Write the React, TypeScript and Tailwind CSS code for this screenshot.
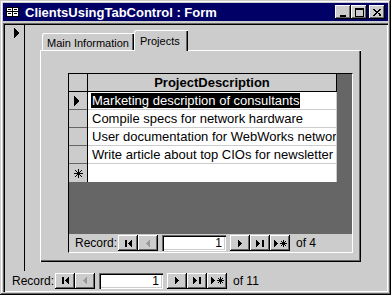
import React from "react";

const raised =
  "shadow-[inset_-1px_-1px_#000,inset_1px_1px_#fff,inset_-2px_-2px_#666666]";
const sunken =
  "shadow-[inset_1px_1px_#666666,inset_2px_2px_#000,inset_-1px_-1px_#fff,inset_-2px_-2px_#cccccc]";

function Tri({ dir = "right", color = "#000" }: { dir?: "left" | "right"; color?: string }) {
  return (
    <svg width="4" height="7" viewBox="0 0 4 7" shapeRendering="crispEdges">
      {dir === "right" ? (
        <path d="M0 0h1v7H0zM1 1h1v5H1zM2 2h1v3H2zM3 3h1v1H3z" fill={color} />
      ) : (
        <path d="M3 0h1v7H3zM2 1h1v5H2zM1 2h1v3H1zM0 3h1v1H0z" fill={color} />
      )}
    </svg>
  );
}

function Star() {
  return (
    <svg width="7" height="7" viewBox="0 0 7 7" shapeRendering="crispEdges">
      <path d="M3 0h1v7H3zM0 3h7v1H0zM1 1h1v1H1zM5 1h1v1H5zM1 5h1v1H1zM5 5h1v1H5zM2 2h3v3H2z" fill="#000" />
    </svg>
  );
}

function NavBtn({ kind }: { kind: "first" | "prev" | "next" | "last" | "new" }) {
  return (
    <div className={`w-[20px] h-[16px] bg-[#cccccc] flex items-center justify-center gap-[1px] ${raised}`}>
      {kind === "first" && (
        <>
          <div className="w-[2px] h-[7px] bg-black" />
          <Tri dir="left" />
        </>
      )}
      {kind === "prev" && <Tri dir="left" color="#999999" />}
      {kind === "next" && <Tri dir="right" />}
      {kind === "last" && (
        <>
          <Tri dir="right" />
          <div className="w-[2px] h-[7px] bg-black ml-[1px]" />
        </>
      )}
      {kind === "new" && (
        <>
          <Tri dir="right" />
          <div className="ml-[1px] flex">
            <Star />
          </div>
        </>
      )}
    </div>
  );
}

function NavBar({ total, pad }: { total: number; pad: string }) {
  return (
    <div className={`flex items-center h-full ${pad} text-[12px] text-black whitespace-nowrap`}>
      <span className="w-[43px]">Record:</span>
      <NavBtn kind="first" />
      <NavBtn kind="prev" />
      <div className={`ml-[4px] w-[64px] h-[16px] bg-white ${sunken} flex items-center justify-end pr-[4px]`}>
        1
      </div>
      <div className="ml-[4px] flex">
        <NavBtn kind="next" />
        <NavBtn kind="last" />
        <NavBtn kind="new" />
      </div>
      <span className="ml-[6px]">of {total}</span>
    </div>
  );
}

const rows = [
  "Marketing description of consultants",
  "Compile specs for network hardware",
  "User documentation for WebWorks network",
  "Write article about top CIOs for newsletter",
];

function CaptionBtn({ kind }: { kind: "min" | "max" | "close" }) {
  return (
    <div className={`w-[16px] h-[14px] bg-[#cccccc] flex items-center justify-center ${raised}`}>
      <svg width="9" height="9" viewBox="0 0 9 9" shapeRendering="crispEdges">
        {kind === "min" && <path d="M1 7h6v2H1z" fill="#000" />}
        {kind === "max" && <path d="M0 0h9v2H0zM0 2h1v7H0zM8 2h1v7H8zM0 8h9v1H0z" fill="#000" />}
        {kind === "close" && (
          <path
            d="M0 1h2v1H0zM1 2h2v1H1zM2 3h2v1H2zM3 4h2v1H3zM2 5h2v1H2zM1 6h2v1H1zM0 7h2v1H0zM6 1h2v1H6zM5 2h2v1H5zM4 3h2v1H4zM5 5h2v1H5zM6 6h2v1H6zM6 7h2v1H6z"
            fill="#000"
          />
        )}
      </svg>
    </div>
  );
}

export default function App() {
  return (
    <div
      className="w-[391px] h-[295px] bg-[#cccccc] p-[3px] flex flex-col shadow-[inset_-1px_-1px_#000,inset_1px_1px_#cccccc,inset_-2px_-2px_#666666,inset_2px_2px_#fff] font-['Liberation_Sans',Arial,sans-serif]"
    >
      {/* Title bar */}
      <div className="h-[18px] bg-[#000066] flex items-center pl-[2px] pr-[3px] shrink-0">
        <svg width="16" height="14" viewBox="0 0 16 14" shapeRendering="crispEdges">
          <rect x="1" y="2" width="13" height="10" fill="#fff" />
          <path d="M1 2h13v1H1zM1 11h13v1H1zM1 2h1v10H1zM13 2h1v10h-1zM7 2h1v10H7zM1 6h13v1H1zM3 4h3v1H3zM9 4h3v1H9zM3 8h3v1H3zM9 8h3v1H9z" fill="#000" />
        </svg>
        <span className="ml-[4px] text-white font-bold text-[13px] leading-none whitespace-nowrap">ClientsUsingTabControl : Form</span>
        <div className="ml-auto flex">
          <CaptionBtn kind="min" />
          <CaptionBtn kind="max" />
          <div className="ml-[2px]">
            <CaptionBtn kind="close" />
          </div>
        </div>
      </div>

      {/* Client area */}
      <div className={`mt-[2px] flex-1 flex flex-col p-[2px] ${sunken}`}>
        <div className="flex-1 flex">
          {/* record selector */}
          <div className="w-[20px] border-r border-black pt-[3px] pl-[9px]">
            <svg width="6" height="10" viewBox="0 0 6 10" shapeRendering="crispEdges">
              <path d="M0 0h1v10H0zM1 1h1v8H1zM2 2h1v6H2zM3 3h1v4H3zM4 4h1v2H4z" fill="#000" />
            </svg>
          </div>
          {/* detail */}
          <div className="flex-1 pl-[15px] pt-[5px]">
            <div className="flex items-end pl-[2px] text-[11px] text-black whitespace-nowrap">
              <div className="w-[92px] h-[17px] pl-[5px] pt-[2px] rounded-tl-[2px] shadow-[inset_1px_1px_#fff,inset_-1px_0_#000,inset_-2px_0_#666666]">
                Main Information
              </div>
              <div className="relative z-10 -mb-[1px] w-[54px] h-[21px] pl-[6px] pt-[3px] bg-[#cccccc] rounded-tl-[2px] shadow-[inset_1px_1px_#fff,inset_-1px_0_#000,inset_-2px_0_#666666]">
                Projects
              </div>
            </div>
            <div className="w-[321px] h-[212px] pl-[28px] pt-[23px] shadow-[inset_1px_1px_#fff,inset_-1px_-1px_#000,inset_-2px_-2px_#666666]">
              {/* subform */}
              <div className="w-[285px] h-[180px] border-l border-t border-black border-r border-r-white border-b border-b-white bg-[#666666] flex flex-col">
                <div className="flex-1">
                  <div className="flex w-[268px]">
                    <div className="w-[19px] border-r border-black bg-[#cccccc] flex flex-col">
                      <div className="h-[18px] border-b border-black" />
                      {rows.map((_, i) => (
                        <div key={i} className="h-[18px] border-b border-[#666666] flex items-center pl-[5px]">
                          {i === 0 && (
                            <svg width="6" height="10" viewBox="0 0 6 10" shapeRendering="crispEdges">
                              <path d="M0 0h1v10H0zM1 1h1v8H1zM2 2h1v6H2zM3 3h1v4H3zM4 4h1v2H4z" fill="#000" />
                            </svg>
                          )}
                        </div>
                      ))}
                      <div className="h-[18px] flex items-center justify-center">
                        <svg width="9" height="9" viewBox="0 0 9 9" shapeRendering="crispEdges">
                          <path d="M4 0h1v9H4zM0 4h9v1H0zM1 1h1v1H1zM2 2h1v1H2zM3 3h1v1H3zM7 1h1v1H7zM6 2h1v1H6zM5 3h1v1H5zM1 7h1v1H1zM2 6h1v1H2zM3 5h1v1H3zM7 7h1v1H7zM6 6h1v1H6zM5 5h1v1H5z" fill="#000" />
                        </svg>
                      </div>
                    </div>
                    <div className="flex-1 flex flex-col overflow-hidden text-[13px] text-black">
                      <div className="h-[18px] border-b border-r border-black bg-[#cccccc] flex items-center justify-center font-bold">
                        ProjectDescription
                      </div>
                      {rows.map((r, i) => (
                        <div key={i} className="h-[18px] bg-white border-b border-r border-[#cccccc] flex items-center pl-[3px] whitespace-nowrap overflow-hidden">
                          <span className={i === 0 ? "bg-black text-white leading-[15px] px-[1px]" : "px-[1px]"}>{r}</span>
                        </div>
                      ))}
                      <div className="h-[18px] bg-white border-r border-[#cccccc]" />
                    </div>
                  </div>
                </div>
                <div className="h-[18px] bg-[#cccccc] shrink-0">
                  <NavBar total={4} pad="pl-[6px]" />
                </div>
              </div>
            </div>
          </div>
        </div>
        <div className="h-[19px] shrink-0">
          <NavBar total={11} pad="pl-[7px]" />
        </div>
      </div>
    </div>
  );
}
